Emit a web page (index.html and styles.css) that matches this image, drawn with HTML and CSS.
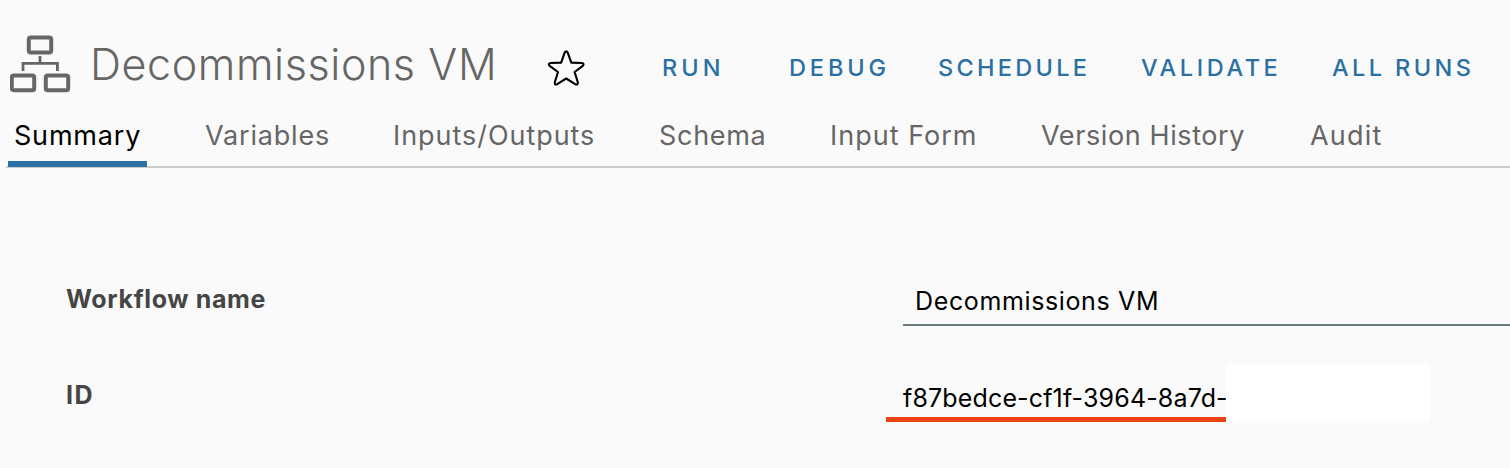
FILE: index.html
```
<!DOCTYPE html>
<html lang="en">
<head>
<meta charset="utf-8">
<title>Decommissions VM</title>
<link rel="stylesheet" href="styles.css">
</head>
<body>
<header class="header">
  <svg class="workflow-icon" width="62" height="58" viewBox="0 0 62 58" fill="none" stroke="#666">
    <g stroke-width="4">
      <rect x="18.8" y="2.6" width="22.4" height="14.8" rx="2"/>
      <rect x="1.8" y="40.4" width="22.4" height="14.8" rx="2"/>
      <rect x="35.8" y="40.4" width="22.4" height="14.8" rx="2"/>
    </g>
    <path stroke-width="2.8" d="M30 21v7.4M13 36v-7.6h34.4V36"/>
  </svg>
  <h1 class="title">Decommissions VM</h1>
  <svg class="star" width="40" height="40" viewBox="0 0 40 40" fill="none" stroke="#000" stroke-width="2.1" stroke-linejoin="round">
    <path d="M17.6 3.6Q19.3 1.2 20.7 3.6L24.3 13.6L34.6 14Q37.8 14.5 35.8 16.8L27.6 23L30.8 33.3Q31.2 36.4 28.2 35.2L19.2 29.5L10.2 35.2Q7.4 36.4 7.8 33.3L11 23L2.6 16.8Q.6 14.5 3.8 14L14.2 13.6Z"/>
  </svg>
  <nav class="actions">
    <a class="run">RUN</a><a class="debug">DEBUG</a><a class="schedule">SCHEDULE</a><a class="validate">VALIDATE</a><a class="all-runs">ALL RUNS</a>
  </nav>
</header>
<nav class="tabs">
  <a class="tab summary active">Summary</a><a class="tab variables">Variables</a><a class="tab io">Inputs/Outputs</a><a class="tab schema">Schema</a><a class="tab form">Input Form</a><a class="tab history">Version History</a><a class="tab audit">Audit</a>
</nav>
<main class="details">
  <div class="label">Workflow name</div>
  <div class="name-field">Decommissions VM</div>
  <div class="label id-label">ID</div>
  <div class="id-row"><span class="id-value">f87bedce-cf1f-3964-8a7d-</span><span class="mask"></span></div>
</main>
</body>
</html>
```
FILE: styles.css
```
* { box-sizing: border-box; }
body { margin: 0; height: 468px; overflow: hidden; background: #fafafa; color: #000; font-family: Inter, "Liberation Sans", sans-serif; white-space: nowrap; }
.header { display: flex; align-items: flex-start; height: 108px; padding: 35px 0 0 10px; }
.workflow-icon { flex: none; margin-right: 18px; }
.title { margin: 3px 0 0; width: 457px; font-size: 43px; line-height: 52px; font-weight: 350; letter-spacing: .6px; color: #666; }
.star { flex: none; margin-top: 14px; }
.actions { display: grid; grid-template-columns: 127px 149px 203px 191px 160px; margin: 16px 0 0 75px; color: #2b70a3; font-size: 23.5px; line-height: 34px; font-weight: 550; }
.run { letter-spacing: 4.1px; }
.debug { letter-spacing: 3.9px; }
.schedule { letter-spacing: 3.3px; }
.validate { letter-spacing: 3.6px; }
.all-runs { letter-spacing: 3.4px; }
.tabs { display: grid; grid-template-columns: 139px 187px 266px 171px 211px 269px 1fr; margin-left: 6px; padding-left: 2px; height: 60px; border-bottom: 2px solid #ccc; }
.tab { height: 59px; padding-left: 59px; padding-top: 9px; font-size: 27px; line-height: 37px; color: #666; }
.tab.active { padding-left: 6px; color: #000; border-bottom: 6px solid #2b70a3; }
.summary { letter-spacing: .8px; }
.variables { padding-left: 58px; letter-spacing: .8px; }
.io { letter-spacing: .95px; }
.schema { letter-spacing: .7px; }
.form { letter-spacing: 1px; }
.history { letter-spacing: .6px; }
.audit { letter-spacing: 1.2px; }
.details { display: grid; grid-template-columns: 837px 1fr; grid-template-rows: 47px 106px; padding: 111px 0 0 66px; }
.label { padding-top: 4px; font-size: 25px; line-height: 32px; font-weight: 700; letter-spacing: .64px; color: #454545; }
.id-label { padding-top: 53px; letter-spacing: 1.5px; }
.name-field { padding: 6px 0 0 12px; border-bottom: 2px solid #6a7a81; font-size: 25px; line-height: 32px; letter-spacing: .63px; }
.id-row { display: flex; margin-top: 38px; height: 58px; }
.id-value { width: 340px; height: 58px; margin-left: -17px; padding: 18px 0 0 17px; border-bottom: 5px solid #ed4213; font-size: 25px; line-height: 32px; letter-spacing: .15px; }
.mask { width: 204px; height: 57px; background: #fff; }
```
